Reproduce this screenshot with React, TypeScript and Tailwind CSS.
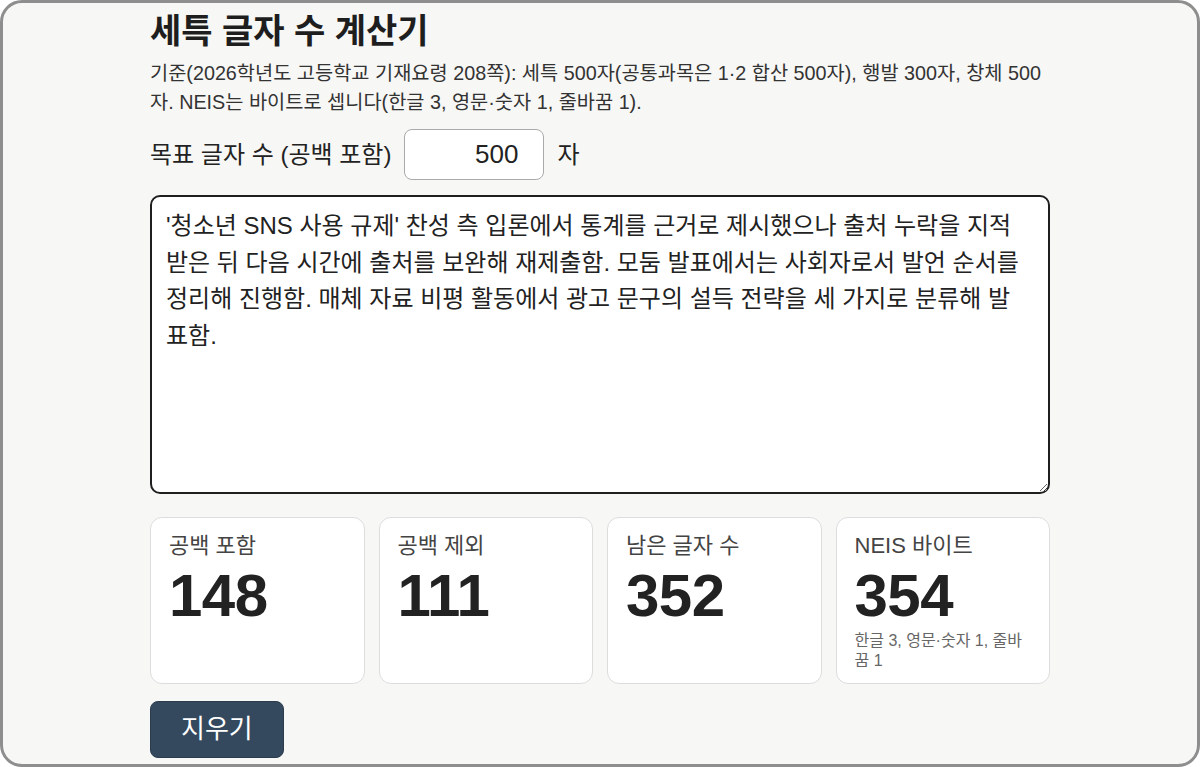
import { useState } from 'react';

// Byte count as NEIS does it: Hangul 3, ASCII 1, newline 1
const neisBytes = (s: string) => {
  let n = 0;
  for (const ch of s) {
    if (ch === '\n') n += 1;
    else if (ch.charCodeAt(0) < 128) n += 1;
    else n += 3;
  }
  return n;
};

const initialText =
  "'청소년 SNS 사용 규제' 찬성 측 입론에서 통계를 근거로 제시했으나 출처 누락을 지적받은 뒤 다음 시간에 출처를 보완해 재제출함. 모둠 발표에서는 사회자로서 발언 순서를 정리해 진행함. 매체 자료 비평 활동에서 광고 문구의 설득 전략을 세 가지로 분류해 발표함.";

interface StatCardProps {
  label: string;
  value: number;
  note?: string;
}

const StatCard = ({ label, value, note }: StatCardProps) => (
  <div className="bg-white rounded-xl border-[1.5px] border-[#dddddd] px-[18px] pt-[13px] pb-[12px]">
    <div className="text-[22px] text-[#444444] leading-[30px]">{label}</div>
    <div className="text-[60px] font-bold text-[#222222] leading-[70px] tracking-[-0.5px]">{value}</div>
    {note && <div className="text-[16px] text-[#666666] leading-[20px]">{note}</div>}
  </div>
);

export default function App() {
  const [text, setText] = useState(initialText);
  const [goal, setGoal] = useState('500');

  const withSpace = [...text].length;
  const noSpace = [...text.replace(/\s/g, '')].length;
  const remaining = (parseInt(goal, 10) || 0) - withSpace;

  return (
    <div
      className="h-[767px] w-full overflow-hidden bg-white"
      style={{ fontFamily: '"Liberation Sans", "Noto Sans CJK KR", sans-serif' }}
    >
      <div className="h-full rounded-[22px] border-[3px] border-[#8e8e8e] bg-[#f7f7f5] overflow-hidden">
        <div className="w-[900px] mx-auto pt-[8px]">
          <h1 className="text-[34px] font-bold text-[#1e1e1e] leading-[40px]">세특 글자 수 계산기</h1>
          <p className="mt-[8px] text-[19.75px] leading-[29px] text-[#333333] break-all">
            기준(2026학년도 고등학교 기재요령 208쪽): 세특 500자(공통과목은 1·2 합산 500자), 행발 300자, 창체 500자. NEIS는 바이트로 셉니다(한글 3, 영문·숫자 1, 줄바꿈 1).
          </p>

          <div className="mt-[12px] flex items-center gap-[13px]">
            <label className="text-[24px] text-[#222222]">목표 글자 수 (공백 포함)</label>
            <input
              value={goal}
              onChange={(e) => setGoal(e.target.value)}
              className="w-[140px] h-[51px] rounded-lg border-[1.5px] border-[#aaaaaa] bg-white text-right pr-[25px] text-[26px] text-[#222222] outline-none"
            />
            <span className="text-[24px] text-[#222222]">자</span>
          </div>

          <textarea
            value={text}
            onChange={(e) => setText(e.target.value)}
            className="mt-[15px] block w-full h-[299px] rounded-[10px] border-2 border-[#1f1f1f] bg-white pl-[14px] pr-[20px] pt-[11px] pb-[11px] text-[24px] leading-[36.5px] text-[#222222] outline-none resize-y"
          />

          <div className="mt-[23px] grid grid-cols-4 gap-[14px]">
            <StatCard label="공백 포함" value={withSpace} />
            <StatCard label="공백 제외" value={noSpace} />
            <StatCard label="남은 글자 수" value={remaining} />
            <StatCard label="NEIS 바이트" value={neisBytes(text)} note="한글 3, 영문·숫자 1, 줄바꿈 1" />
          </div>

          <button
            onClick={() => setText('')}
            className="mt-[17px] h-[57px] px-[30px] rounded-lg bg-[#34495e] text-white text-[26px] border border-[#2a3c4e]"
          >
            지우기
          </button>
        </div>
      </div>
    </div>
  );
}
